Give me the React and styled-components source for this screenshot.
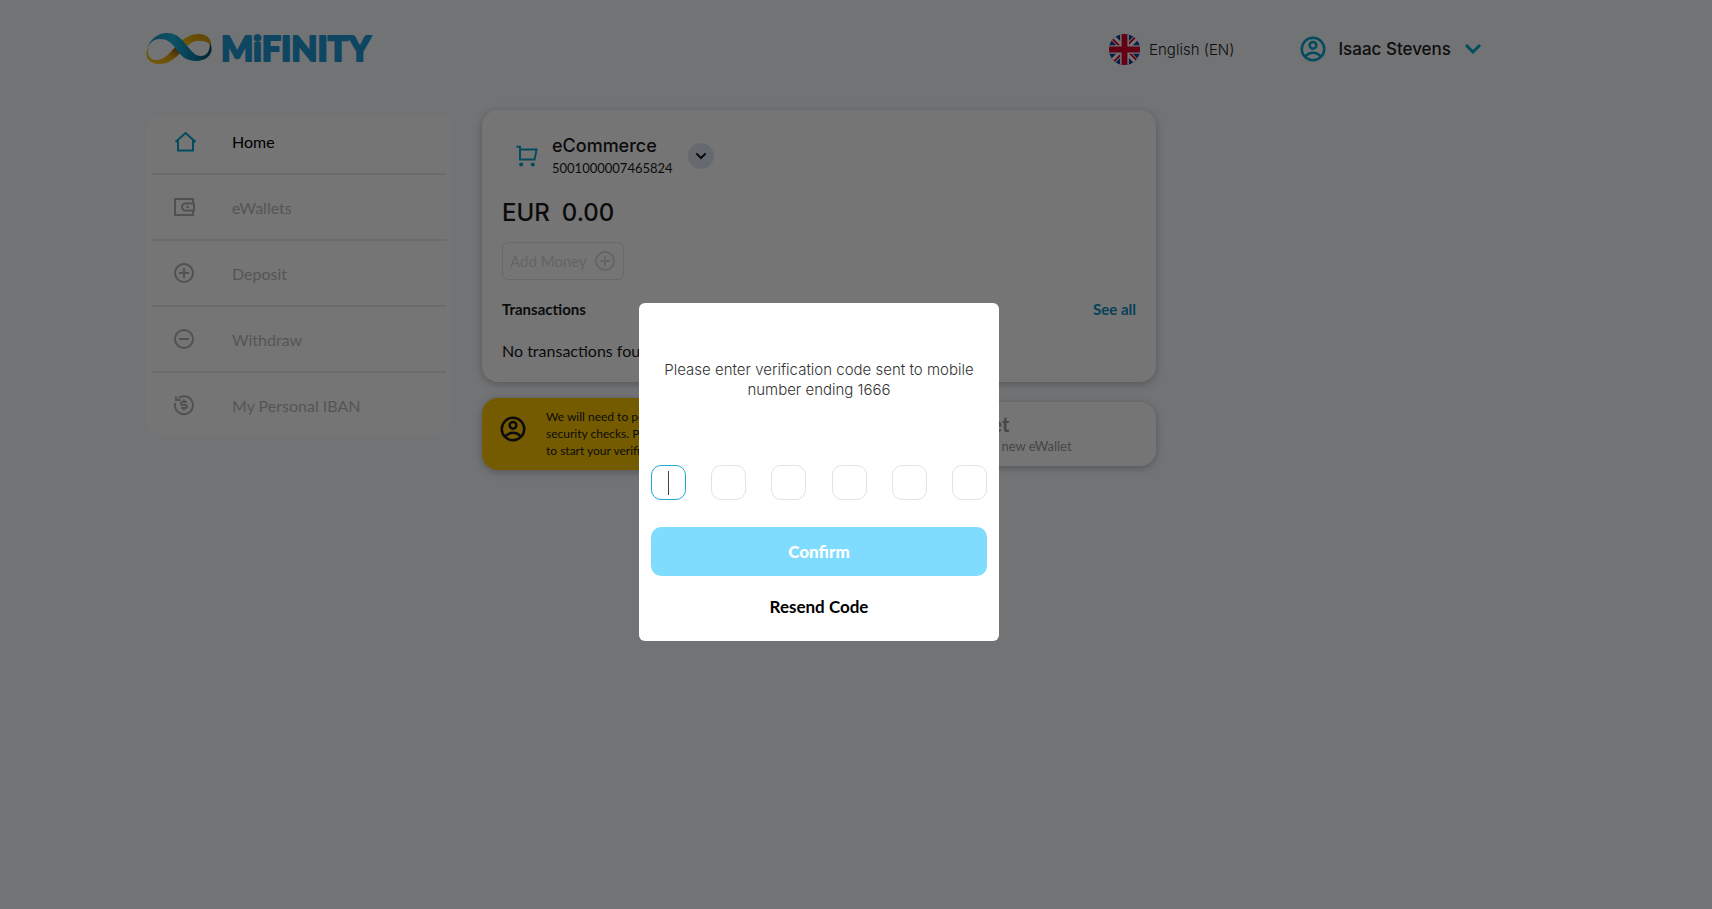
//------------------------------------------------------------------------
import { useState } from "react";
//------------------------------------------------------------------------
import styled, { createGlobalStyle } from "styled-components";
//------------------------------------------------------------------------

const GlobalStyle = createGlobalStyle`
    * {
        box-sizing: border-box;
    }

    body {
        margin: 0;
        background: #f7fafe;
        color: #1a1a1a;
        font-family: Lato, "Liberation Sans", sans-serif;
        font-size: 16px;
    }

    button, input {
        font: inherit;
    }

    h2, p, ul {
        margin: 0;
        padding: 0;
    }
`;

const heading = `Inter, "Open Sans", sans-serif`;

//------------------------------------------------------------------------
// page
//------------------------------------------------------------------------

const Page = styled.div`
    padding: 0 220px 40px 146px;
`;

const Header = styled.header`
    display: flex;
    align-items: center;
    justify-content: space-between;

    height: 98px;
`;

const HeaderActions = styled.div`
    display: flex;
    align-items: center;
    gap: 64px;

    margin-right: 7px;
`;

const HeaderButton = styled.button`
    display: flex;
    align-items: center;
    gap: ${({ $gap }) => $gap};

    padding: 0;
    border: none;
    background: none;

    color: #222;
    font-family: ${heading};
    font-size: ${({ $size }) => $size};
    font-weight: ${({ $weight }) => $weight};
`;

const Accent = styled.span`
    display: flex;
    color: #08a5cd;
`;

const Columns = styled.div`
    display: grid;
    grid-template-columns: 306px minmax(0, 1fr) 306px;
    gap: 30px;
    align-items: start;

    padding-top: 12px;
`;

//------------------------------------------------------------------------
// sidebar
//------------------------------------------------------------------------

const Sidebar = styled.nav`
    margin-top: 5px;
    padding: 0 6px;
    border-radius: 16px;
    background: white;
`;

const MenuList = styled.ul`
    list-style: none;
`;

const MenuItem = styled.li`
    height: 66px;
    border-bottom: 2px solid #ebebeb;

    &:first-child {
        height: 60px;
        padding-bottom: 6px;
    }

    &:last-child {
        height: 62px;
        padding-top: 2px;
        border-bottom: none;
    }
`;

const MenuLink = styled.a`
    display: flex;
    align-items: center;
    gap: 36px;

    height: 100%;
    padding-left: 20px;

    color: ${({ $active }) => ($active ? "#000" : "#bababa")};
    text-decoration: none;

    svg {
        color: ${({ $active }) => ($active ? "#08a5cd" : "#b0b0b0")};
    }
`;

//------------------------------------------------------------------------
// wallet card
//------------------------------------------------------------------------

const Main = styled.main`
    display: flex;
    flex-direction: column;
    gap: 16px;
`;

const Card = styled.section`
    padding: 20px 20px 21px;
    border-radius: 16px;
    background: white;
    box-shadow: 0 2px 8px rgba(0, 0, 0, 0.25);
`;

const Account = styled.div`
    display: flex;
    align-items: center;
    gap: 11px;

    height: 52px;
    padding-left: 11px;
`;

const AccountName = styled.h2`
    font-family: ${heading};
    font-size: 18px;
    font-weight: 500;
    line-height: 24px;
`;

const AccountNumber = styled.p`
    font-size: 13px;
    line-height: 20px;
`;

const RoundButton = styled.button`
    display: flex;
    align-items: center;
    justify-content: center;

    width: 26px;
    height: 26px;
    margin-left: 4px;
    padding: 0;
    border: none;
    border-radius: 50%;
    background: #dfe8f5;
    color: #111;
`;

const Balance = styled.p`
    display: flex;
    gap: 12px;

    margin-top: 15px;

    font-family: ${heading};
    font-size: 24px;
    font-weight: 500;
    line-height: 32px;
`;

const AddMoney = styled.button`
    display: flex;
    align-items: center;
    gap: 6px;

    height: 38px;
    margin-top: 13px;
    padding: 0 6px 0 7px;
    border: 1px solid #e4e4e4;
    border-radius: 6px;
    background: none;

    color: #dadada;
    font-size: 15px;
`;

const TransactionsHead = styled.div`
    display: flex;
    align-items: center;
    justify-content: space-between;

    margin-top: 19px;

    font-weight: 700;
    font-size: 15px;
    line-height: 20px;
`;

const SeeAll = styled.a`
    color: #0d8ec4;
    text-decoration: none;
`;

const Empty = styled.p`
    margin-top: 22px;
    line-height: 20px;
`;

//------------------------------------------------------------------------
// cards under the wallet
//------------------------------------------------------------------------

const Row = styled.div`
    display: grid;
    grid-template-columns: 1fr 1fr;
    gap: 16px;
    align-items: center;
`;

const Notice = styled.section`
    display: flex;
    align-items: flex-start;
    gap: 18px;

    height: 72px;
    padding: 10px 16px;
    border-radius: 16px;
    background: #ffc700;
    box-shadow: 0 2px 8px rgba(0, 0, 0, 0.25);

    font-size: 12px;
    line-height: 17px;

    svg {
        flex-shrink: 0;
        margin-top: 6px;
    }
`;

const NewWallet = styled.section`
    display: flex;
    flex-direction: column;
    justify-content: center;

    height: 64px;
    padding-left: 115px;
    border-radius: 16px;
    background: white;
    box-shadow: 0 2px 8px rgba(0, 0, 0, 0.25);

    color: #999;
`;

const NewWalletTitle = styled.h2`
    font-size: 20px;
    line-height: 24px;
`;

const NewWalletText = styled.p`
    font-size: 13px;
    line-height: 20px;
`;

//------------------------------------------------------------------------
// verification dialog
//------------------------------------------------------------------------

const Overlay = styled.div`
    position: fixed;
    inset: 0;

    display: flex;
    align-items: center;
    justify-content: center;

    padding: 35px 74px 0 0;
    background: rgba(0, 0, 0, 0.54);
`;

const Dialog = styled.form`
    width: 360px;
    padding: 57px 12px 19px;
    border-radius: 6px;
    background: white;

    text-align: center;
`;

const Message = styled.p`
    color: #333;
    font-family: ${heading};
    font-size: 15px;
    font-weight: 300;
    line-height: 20px;
`;

const CodeRow = styled.div`
    display: flex;
    justify-content: space-between;

    margin-top: 65px;
`;

const CodeCell = styled.label`
    position: relative;
    display: flex;
`;

const CodeInput = styled.input`
    width: 35px;
    height: 35px;
    padding: 0;
    border: 1px solid ${({ $active }) => ($active ? "#1fa9d6" : "#e2e2e2")};
    border-radius: 10px;
    background: white;
    outline: none;

    caret-color: transparent;
    text-align: center;
`;

const Caret = styled.span`
    position: absolute;
    top: 6px;
    left: 17px;

    width: 1px;
    height: 24px;
    background: #444;
`;

const Confirm = styled.button`
    width: 100%;
    height: 49px;
    margin-top: 27px;
    border: none;
    border-radius: 10px;
    background: #80dcff;

    color: white;
    font-size: 17px;
    font-weight: 900;
`;

const Resend = styled.button`
    height: 32px;
    margin-top: 14px;
    padding: 0 12px;
    border: none;
    background: none;

    color: #000;
    font-size: 17px;
    font-weight: 700;
`;

//------------------------------------------------------------------------
// icons
//------------------------------------------------------------------------

function Icon({ size = 24, children }) {
    return (
        <svg
            width={size}
            height={size}
            viewBox="0 0 24 24"
            fill="currentColor"
            aria-hidden="true"
        >
            {children}
        </svg>
    );
}

function UserIcon() {
    return (
        <Icon size={30}>
            <g fill="none" stroke="currentColor" strokeWidth="2">
                <circle cx="12" cy="12" r="9" />
                <circle cx="12" cy="9" r="2.7" />
                <path d="M5.6 18.2C7.3 16.2 9.6 15 12 15s4.7 1.2 6.4 3.2" />
            </g>
        </Icon>
    );
}

function ChevronIcon({ size = 24 }) {
    return (
        <Icon size={size}>
            <path d="M5 8l7 7 7-7" fill="none" stroke="currentColor" strokeWidth="3" />
        </Icon>
    );
}

function CartIcon() {
    return (
        <Icon size={28}>
            <path
                d="M3 4h3v11h12.500l1.700-8.500H6"
                fill="none"
                stroke="currentColor"
                strokeWidth="1.700"
            />
            <circle cx="7" cy="19.200" r="1.700" />
            <circle cx="17" cy="19.200" r="1.700" />
        </Icon>
    );
}

function Flag() {
    return (
        <svg width="31" height="31" viewBox="0 0 32 32" aria-hidden="true">
            <clipPath id="flag">
                <circle cx="16" cy="16" r="16" />
            </clipPath>
            <g clipPath="url(#flag)">
                <path fill="#0a3f96" d="M0 0h32v32H0z" />
                <path stroke="#fff" strokeWidth="6" d="M2 2l28 28M30 2L2 30" />
                <path
                    stroke="#d80030"
                    strokeWidth="2"
                    d="M3 4.500l9 9M29 27.500l-9-9M27.500 3l-9 9M4.500 29l9-9"
                />
                <path stroke="#fff" strokeWidth="9" d="M16 0v32M0 16h32" />
                <path stroke="#d80030" strokeWidth="6" d="M16 0v32M0 16h32" />
            </g>
        </svg>
    );
}

function Logo() {
    return (
        <svg width="236" height="46" viewBox="1 -7 236 46" role="img" aria-label="MiFinity">
            <defs>
                <linearGradient id="blue" x1="0" y1="0" x2="1" y2="0">
                    <stop offset="0" stopColor="#1b8fb8" />
                    <stop offset="0.4" stopColor="#1fb0e0" />
                    <stop offset="0.7" stopColor="#0d86b0" />
                    <stop offset="1" stopColor="#0a5068" />
                </linearGradient>
                <linearGradient id="gold" x1="0" y1="1" x2="1" y2="0">
                    <stop offset="0" stopColor="#ffc91a" />
                    <stop offset="0.3" stopColor="#e5a812" />
                    <stop offset="0.48" stopColor="#9a5d10" />
                    <stop offset="0.65" stopColor="#f5bd10" />
                    <stop offset="1" stopColor="#c9930c" />
                </linearGradient>
            </defs>
            <path
                fill="url(#gold)"
                d="M4 14C-2 22 3 31 14 31c10 0 17-6 24-14 7-7 12-10 18-9 5 0 8 2 10 6C67 5 61 1 54 1c-9 0-15 4-22 11C25 20 20 26 13 27 5 28 1 22 4 14z"
            />
            <path
                fill="url(#blue)"
                d="M2 16C5 6 13 0 22 0c11 0 15 7 21 14 5 6 8 9 13 9 5 0 9-4 9-13 5 9-2 18-14 18-10 0-15-5-20-12-5-7-9-10-16-10C9 6 5 9 2 16z"
            />
            <text
                x="76"
                y="28"
                fill="#1f9ad6"
                stroke="#1f9ad6"
                strokeWidth="2"
                strokeLinejoin="round"
                fontFamily="Lato"
                fontWeight="900"
                fontSize="34"
            >
                MiFINITY
            </text>
        </svg>
    );
}

const menu = [
    {
        label: "Home",
        icon: (
            <path
                d="M3.500 13L13.500 4l10 9M6 11.500V21.500h15V11.500"
                fill="none"
                stroke="currentColor"
                strokeWidth="2"
            />
        ),
    },
    {
        label: "eWallets",
        icon: (
            <g fill="none" stroke="currentColor" strokeWidth="2">
                <path d="M21 8V4H3v16h18v-4" />
                <path d="M22 8.500h-8.500a3.500 3.500 0 0 0 0 7H22z" />
                <path d="M14.500 12h2.500" />
            </g>
        ),
    },
    {
        label: "Deposit",
        icon: (
            <g fill="none" stroke="currentColor" strokeWidth="2">
                <circle cx="12" cy="12" r="9" />
                <path d="M12 7v10M7 12h10" />
            </g>
        ),
    },
    {
        label: "Withdraw",
        icon: (
            <g fill="none" stroke="currentColor" strokeWidth="2">
                <circle cx="12" cy="12" r="9" />
                <path d="M7 12h10" />
            </g>
        ),
    },
    {
        label: "My Personal IBAN",
        icon: (
            <g fill="none" stroke="currentColor" strokeWidth="2">
                <path d="M6.500 5a9 9 0 1 1-3.300 5M4 3.500V7h4.500" />
                <path d="M15 9h-4.500a1.500 1.500 0 0 0 0 3h3a1.500 1.500 0 0 1 0 3H9M12 6.500V9m0 6v2.500" />
            </g>
        ),
    },
];

//------------------------------------------------------------------------

function VerificationDialog() {
    const [code, setCode] = useState(["", "", "", "", "", ""]);
    const [active, setActive] = useState(0);

    const handleChange = (index, value) => {
        setCode(code.map((digit, i) => (i === index ? value : digit)));
    };

    return (
        <Overlay>
            <Dialog
                role="dialog"
                aria-modal="true"
                aria-labelledby="message"
                onSubmit={(e) => e.preventDefault()}
            >
                <Message id="message">
                    Please enter verification code sent to mobile number ending 1666
                </Message>
                <CodeRow>
                    {code.map((digit, index) => (
                        <CodeCell key={index}>
                            <CodeInput
                                aria-label={`Digit ${index + 1}`}
                                inputMode="numeric"
                                maxLength={1}
                                value={digit}
                                $active={index === active}
                                onFocus={() => setActive(index)}
                                onChange={(e) => handleChange(index, e.target.value)}
                            />
                            {index === active && digit === "" && <Caret />}
                        </CodeCell>
                    ))}
                </CodeRow>
                <Confirm type="submit">Confirm</Confirm>
                <Resend type="button">Resend Code</Resend>
            </Dialog>
        </Overlay>
    );
}

function App() {
    return (
        <>
            <GlobalStyle />
            <Page>
                <Header>
                    <Logo />
                    <HeaderActions>
                        <HeaderButton $gap="9px" $size="15px" $weight="300">
                            <Flag />
                            English (EN)
                        </HeaderButton>
                        <HeaderButton $gap="10px" $size="17px" $weight="500">
                            <Accent>
                                <UserIcon />
                            </Accent>
                            Isaac Stevens
                            <Accent>
                                <ChevronIcon />
                            </Accent>
                        </HeaderButton>
                    </HeaderActions>
                </Header>
                <Columns>
                    <Sidebar>
                        <MenuList>
                            {menu.map(({ label, icon }, index) => (
                                <MenuItem key={label}>
                                    <MenuLink href="#" $active={index === 0}>
                                        <Icon>{icon}</Icon>
                                        {label}
                                    </MenuLink>
                                </MenuItem>
                            ))}
                        </MenuList>
                    </Sidebar>
                    <Main>
                        <Card>
                            <Account>
                                <Accent>
                                    <CartIcon />
                                </Accent>
                                <div>
                                    <AccountName>eCommerce</AccountName>
                                    <AccountNumber>5001000007465824</AccountNumber>
                                </div>
                                <RoundButton aria-label="Choose account">
                                    <ChevronIcon size={16} />
                                </RoundButton>
                            </Account>
                            <Balance>
                                <span>EUR</span>
                                <span>0.00</span>
                            </Balance>
                            <AddMoney>
                                Add Money
                                <Icon>{menu[2].icon}</Icon>
                            </AddMoney>
                            <TransactionsHead>
                                <span>Transactions</span>
                                <SeeAll href="#">See all</SeeAll>
                            </TransactionsHead>
                            <Empty>No transactions found</Empty>
                        </Card>
                        <Row>
                            <Notice>
                                <UserIcon />
                                <p>
                                    We will need to perform some
                                    <br />
                                    security checks. Press here
                                    <br />
                                    to start your verification
                                </p>
                            </Notice>
                            <NewWallet>
                                <NewWalletTitle>eWallet</NewWalletTitle>
                                <NewWalletText>Request a new eWallet</NewWalletText>
                            </NewWallet>
                        </Row>
                    </Main>
                </Columns>
            </Page>
            <VerificationDialog />
        </>
    );
}

export default App;
